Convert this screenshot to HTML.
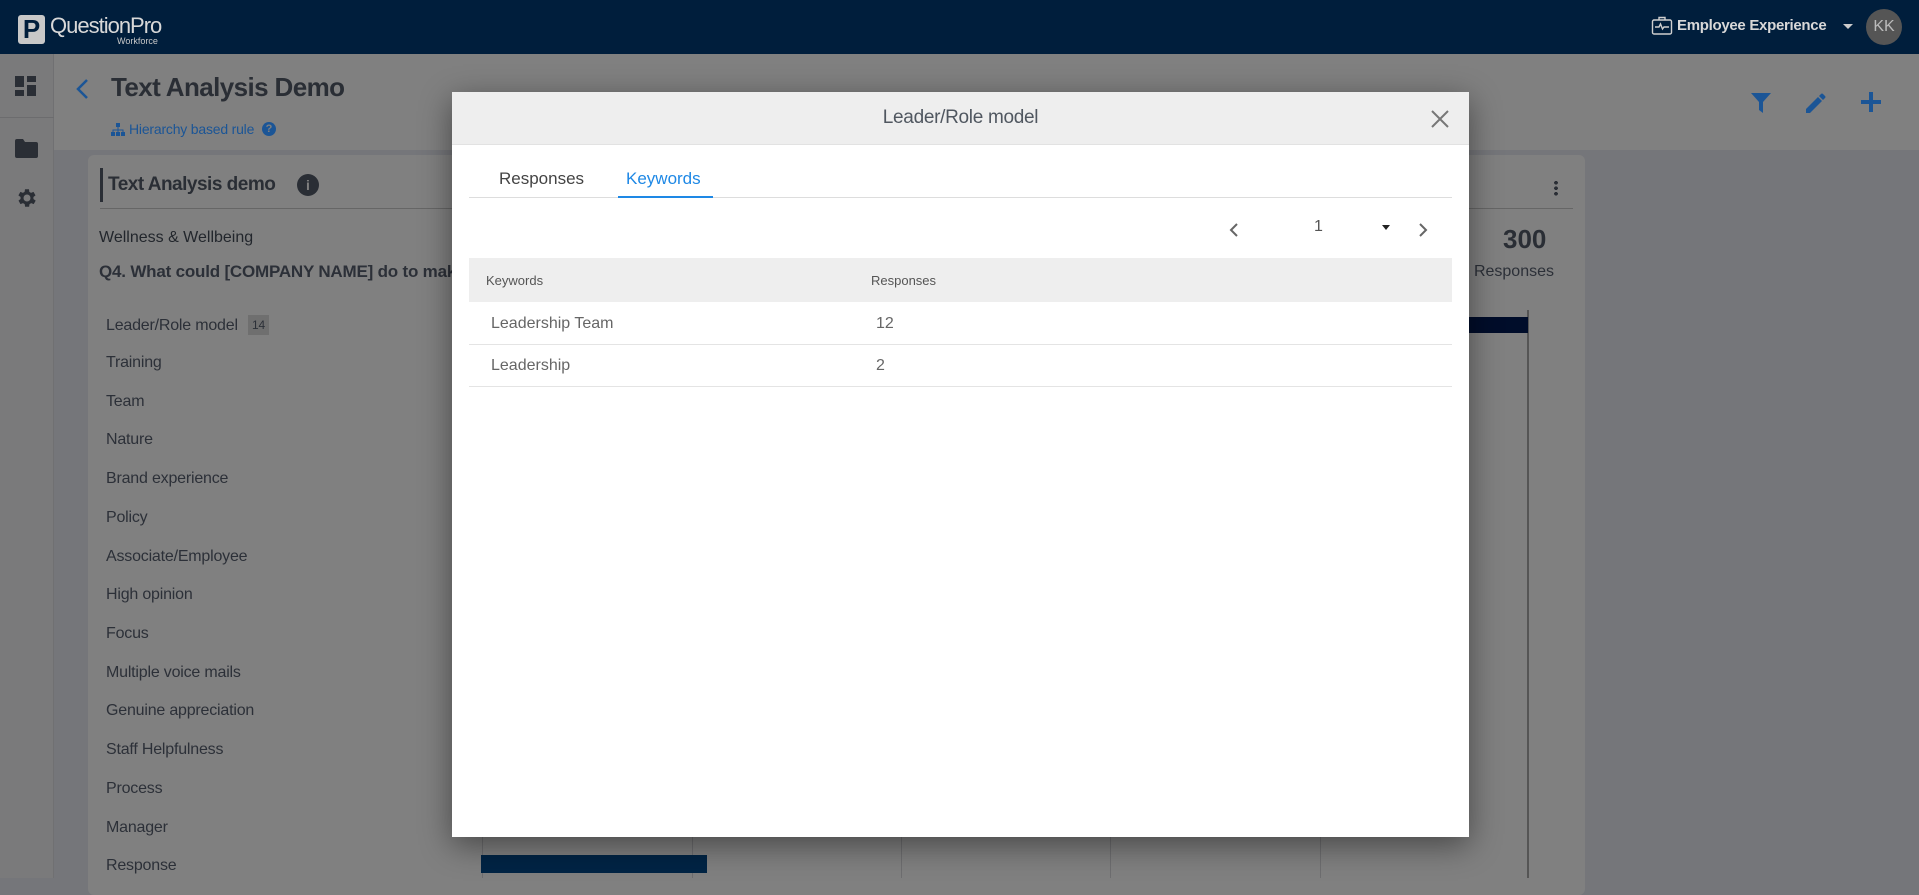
<!DOCTYPE html>
<html><head><meta charset="utf-8"><style>
*{margin:0;padding:0;box-sizing:border-box}
body{width:1919px;height:878px;overflow:hidden;background:#75767a;font-family:"Liberation Sans",sans-serif;position:relative;color:#272b31}
.abs{position:absolute}
.top{left:0;top:0;width:1919px;height:54px;background:#001e3c}
.side{left:0;top:54px;width:54px;height:824px;background:#7a7a7b;border-right:1px solid #707072}
.hdr{left:54px;top:54px;width:1865px;height:96px;background:#808080}
.card{left:88px;top:155px;width:1497px;height:740px;background:#808080;border-radius:6px}
.item{position:absolute;left:106px;font-size:16px;color:#2c3038;letter-spacing:-0.2px}
.grid{position:absolute;top:310px;width:1px;height:568px;background:#6e6e70}
.modal{left:452px;top:92px;width:1017px;height:745px;background:#fff;box-shadow:0 8px 30px rgba(0,0,0,.45)}
.mh{left:0;top:0;width:1017px;height:53px;background:#eeeeee;border-bottom:1px solid #e2e2e2}
.cell{position:absolute;font-size:16px;color:#666}
</style></head><body>
<div class="abs top"></div>
<div class="abs" style="left:18px;top:15px;width:27px;height:29px;background:#c8c8c8;border-radius:3px;color:#001e3c;font-weight:bold;font-size:26px;line-height:29px;text-align:center">P</div>
<div class="abs" style="left:50px;top:13px;font-size:22px;color:#d8d8d8;letter-spacing:-1px">QuestionPro</div>
<div class="abs" style="left:117px;top:36px;font-size:9px;color:#c8c8c8">Workforce</div>
<svg class="abs" style="left:1651px;top:15px" width="22" height="22" viewBox="0 0 22 22" fill="none" stroke="#cfcfcf" stroke-width="1.4"><rect x="1.5" y="5" width="19" height="14" rx="1.5"/><path d="M8 5V2.5h6V5M4 12h4l1.5-3 2 5 1.5-2h5"/></svg>
<div class="abs" style="left:1677px;top:17px;font-size:15px;font-weight:bold;color:#d8d8d8;letter-spacing:-0.3px">Employee Experience</div>
<div class="abs" style="left:1843px;top:24px;border:5px solid transparent;border-top:5px solid #ccc"></div>
<div class="abs" style="left:1866px;top:9px;width:36px;height:36px;border-radius:50%;background:#555;color:#bbb;font-size:16px;line-height:36px;text-align:center">KK</div>

<div class="abs side"></div>
<svg class="abs" style="left:15px;top:76px" width="22" height="20" viewBox="0 0 22 20" fill="#2a2e35"><rect x="0" y="0" width="9" height="11"/><rect x="12" y="0" width="9" height="6"/><rect x="0" y="14" width="9" height="6"/><rect x="12" y="9" width="9" height="11"/></svg>
<div class="abs" style="left:0;top:117px;width:54px;height:1px;background:#6c6c6e"></div>
<svg class="abs" style="left:15px;top:139px" width="23" height="19" viewBox="0 0 23 19" fill="#2a2e35"><path d="M0 2q0-2 2-2h6l2 3h11q2 0 2 2v12q0 2-2 2H2q-2 0-2-2z"/></svg>
<svg class="abs" style="left:14px;top:186px" width="24" height="24" viewBox="0 0 24 24" fill="#2a2e35"><path d="M19.4 13a7.5 7.5 0 000-2l2.1-1.6-2-3.5-2.5 1a7 7 0 00-1.7-1L15 3.2h-4l-.4 2.7a7 7 0 00-1.7 1l-2.5-1-2 3.5L6.6 11a7.5 7.5 0 000 2l-2.1 1.6 2 3.5 2.5-1a7 7 0 001.7 1l.4 2.7h4l.4-2.7a7 7 0 001.7-1l2.5 1 2-3.5zM13 15.5a3.5 3.5 0 110-7 3.5 3.5 0 010 7z"/></svg>

<div class="abs hdr"></div>
<svg class="abs" style="left:75px;top:78px" width="14" height="22" viewBox="0 0 14 22" fill="none" stroke="#1b5596" stroke-width="2.5"><path d="M12 2L3 11l9 9"/></svg>
<div class="abs" style="left:111px;top:72px;font-size:26px;font-weight:bold;color:#2a2e35;letter-spacing:-0.6px">Text Analysis Demo</div>
<svg class="abs" style="left:111px;top:123px" width="14" height="13" viewBox="0 0 14 13" fill="#1b5596"><rect x="5" y="0" width="4" height="4"/><rect x="0" y="9" width="4" height="4"/><rect x="5" y="9" width="4" height="4"/><rect x="10" y="9" width="4" height="4"/><path d="M6.5 4h1v2.5h5V9h-1V7.5h-4V9h-1V7.5h-4V9h-1V6.5h5z"/></svg>
<div class="abs" style="left:129px;top:121px;font-size:14px;color:#1b5596;letter-spacing:-0.2px">Hierarchy based rule</div>
<div class="abs" style="left:262px;top:122px;width:14px;height:14px;border-radius:50%;background:#1b5596;color:#808080;font-size:11px;font-weight:bold;text-align:center;line-height:14px">?</div>
<svg class="abs" style="left:1751px;top:93px" width="20" height="20" viewBox="0 0 20 20" fill="#1b5596"><path d="M0 0h20l-8 9v11l-4-3V9z"/></svg>
<svg class="abs" style="left:1806px;top:93px" width="20" height="20" viewBox="0 0 20 20" fill="#1b5596"><path d="M0 16v4h4L16 8l-4-4zM13 3l4 4 2-2q1-1 0-2l-2-2q-1-1-2 0z"/></svg>
<svg class="abs" style="left:1861px;top:92px" width="20" height="20" viewBox="0 0 20 20" fill="#1b5596"><path d="M8 0h4v8h8v4h-8v8H8v-8H0V8h8z"/></svg>

<div class="abs card"></div>
<div class="abs" style="left:100px;top:168px;width:3px;height:34px;background:#2a2e35"></div>
<div class="abs" style="left:108px;top:174px;font-size:19px;font-weight:bold;color:#2a2e35;letter-spacing:-0.5px">Text Analysis demo</div>
<div class="abs" style="left:297px;top:174px;width:22px;height:22px;border-radius:50%;background:#2a2e35;color:#808080;font-weight:bold;font-size:14px;text-align:center;line-height:22px">i</div>
<div class="abs" style="left:100px;top:208px;width:1473px;height:1px;background:#666"></div>
<div class="abs" style="left:1554px;top:180px;width:4px;height:16px;background:radial-gradient(circle,#2a2e35 1.8px,transparent 2px) 0 0/4px 5.5px"></div>
<div class="abs" style="left:99px;top:229px;font-size:16px;color:#22262c">Wellness &amp; Wellbeing</div>
<div class="abs" style="left:99px;top:262px;font-size:17px;font-weight:bold;color:#2c3038;letter-spacing:-0.2px">Q4. What could [COMPANY NAME] do to make</div>
<div class="abs" style="left:1503px;top:224px;font-size:26px;font-weight:bold;color:#2a2e35">300</div>
<div class="abs" style="left:1400px;top:263px;width:1154px;text-align:right;font-size:16px;color:#2c3038;left:400px">Total Responses</div>

<div class="item" style="top:315px">Leader/Role model <span style="display:inline-block;background:#6f6f6f;font-size:12px;padding:3px 4px;margin-left:6px;vertical-align:1px">14</span></div>
<div class="item" style="top:354px">Training</div>
<div class="item" style="top:393px">Team</div>
<div class="item" style="top:431px">Nature</div>
<div class="item" style="top:470px">Brand experience</div>
<div class="item" style="top:509px">Policy</div>
<div class="item" style="top:548px">Associate/Employee</div>
<div class="item" style="top:586px">High opinion</div>
<div class="item" style="top:625px">Focus</div>
<div class="item" style="top:664px">Multiple voice mails</div>
<div class="item" style="top:702px">Genuine appreciation</div>
<div class="item" style="top:741px">Staff Helpfulness</div>
<div class="item" style="top:780px">Process</div>
<div class="item" style="top:819px">Manager</div>
<div class="item" style="top:857px">Response</div>

<div class="grid" style="left:482px"></div><div class="grid" style="left:692px"></div><div class="grid" style="left:901px"></div><div class="grid" style="left:1110px"></div><div class="grid" style="left:1320px"></div>
<div class="grid" style="left:1527px;width:2px;background:#555"></div>
<div class="abs" style="left:1400px;top:317px;width:128px;height:16px;background:#000d2a"></div>
<div class="abs" style="left:481px;top:855px;width:226px;height:18px;background:#002445"></div>

<div class="abs modal">
 <div class="abs mh"></div>
 <div class="abs" style="left:0;top:15px;width:1017px;text-align:center;font-size:19px;color:#505760;letter-spacing:-0.3px">Leader/Role model</div>
 <svg class="abs" style="left:979px;top:18px" width="18" height="18" viewBox="0 0 18 18" stroke="#777" stroke-width="2"><path d="M1 1l16 16M17 1L1 17"/></svg>
 <div class="abs" style="left:47px;top:77px;font-size:17px;color:#444">Responses</div>
 <div class="abs" style="left:174px;top:77px;font-size:17px;color:#1e88e5">Keywords</div>
 <div class="abs" style="left:17px;top:105px;width:983px;height:1px;background:#ddd"></div>
 <div class="abs" style="left:166px;top:104px;width:95px;height:2px;background:#1e88e5"></div>
 <svg class="abs" style="left:777px;top:130px" width="10" height="16" viewBox="0 0 10 16" fill="none" stroke="#666" stroke-width="2"><path d="M8 2L2 8l6 6"/></svg>
 <div class="abs" style="left:862px;top:126px;font-size:16px;color:#555">1</div>
 <div class="abs" style="left:930px;top:133px;border:4px solid transparent;border-top:5px solid #222"></div>
 <svg class="abs" style="left:966px;top:130px" width="10" height="16" viewBox="0 0 10 16" fill="none" stroke="#666" stroke-width="2"><path d="M2 2l6 6-6 6"/></svg>
 <div class="abs" style="left:17px;top:166px;width:983px;height:44px;background:#eeeeee"></div>
 <div class="cell" style="left:34px;top:181px;font-size:13px;color:#555">Keywords</div>
 <div class="cell" style="left:419px;top:181px;font-size:13px;color:#555">Responses</div>
 <div class="cell" style="left:39px;top:223px">Leadership Team</div>
 <div class="cell" style="left:424px;top:223px">12</div>
 <div class="abs" style="left:17px;top:252px;width:983px;height:1px;background:#e4e4e4"></div>
 <div class="cell" style="left:39px;top:265px">Leadership</div>
 <div class="cell" style="left:424px;top:265px">2</div>
 <div class="abs" style="left:17px;top:294px;width:983px;height:1px;background:#e4e4e4"></div>
</div>
</body></html>
